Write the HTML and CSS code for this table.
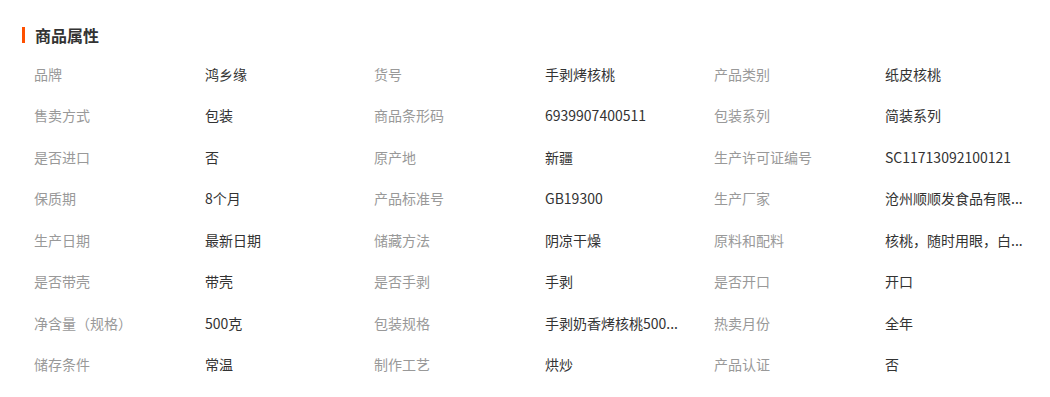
FILE: index.html
```html
<!DOCTYPE html>
<html lang="zh-CN">
<head>
<meta charset="utf-8">
<title>商品属性</title>
<link rel="stylesheet" href="styles.css">
</head>
<body>
<div class="attrs">
  <h2 class="title">商品属性</h2>
  <div class="grid">
    <span class="k">品牌</span><span class="v">鸿乡缘</span>
    <span class="k">货号</span><span class="v">手剥烤核桃</span>
    <span class="k">产品类别</span><span class="v">纸皮核桃</span>

    <span class="k">售卖方式</span><span class="v">包装</span>
    <span class="k">商品条形码</span><span class="v">6939907400511</span>
    <span class="k">包装系列</span><span class="v">简装系列</span>

    <span class="k">是否进口</span><span class="v">否</span>
    <span class="k">原产地</span><span class="v">新疆</span>
    <span class="k">生产许可证编号</span><span class="v">SC11713092100121</span>

    <span class="k">保质期</span><span class="v">8个月</span>
    <span class="k">产品标准号</span><span class="v">GB19300</span>
    <span class="k">生产厂家</span><span class="v">沧州顺顺发食品有限...</span>

    <span class="k">生产日期</span><span class="v">最新日期</span>
    <span class="k">储藏方法</span><span class="v">阴凉干燥</span>
    <span class="k">原料和配料</span><span class="v">核桃，随时用眼，白...</span>

    <span class="k">是否带壳</span><span class="v">带壳</span>
    <span class="k">是否手剥</span><span class="v">手剥</span>
    <span class="k">是否开口</span><span class="v">开口</span>

    <span class="k">净含量（规格）</span><span class="v">500克</span>
    <span class="k">包装规格</span><span class="v">手剥奶香烤核桃500...</span>
    <span class="k">热卖月份</span><span class="v">全年</span>

    <span class="k">储存条件</span><span class="v">常温</span>
    <span class="k">制作工艺</span><span class="v">烘炒</span>
    <span class="k">产品认证</span><span class="v">否</span>
  </div>
</div>
</body>
</html>
```

FILE: styles.css
```css
html, body {
  margin: 0;
  padding: 0;
  background: #fff;
}
body {
  font-family: "Noto Sans CJK SC", "Microsoft YaHei", sans-serif;
  color: #333;
}
.attrs {
  padding: 27px 0 0 22px;
}
.title {
  margin: 0;
  font-size: 16px;
  line-height: 16px;
  font-weight: bold;
  color: #333;
  border-left: 3px solid #ff5000;
  padding-left: 10px;
}
.grid {
  margin: 10.3px 0 0 12px;
  display: grid;
  grid-template-columns: 171px 169px 171px 169px 171px 1fr;
  grid-auto-rows: 41.43px;
  align-items: center;
  font-size: 14px;
  line-height: 20px;
}
.k {
  color: #999;
  white-space: nowrap;
}
.v {
  color: #333;
  white-space: nowrap;
}
```
